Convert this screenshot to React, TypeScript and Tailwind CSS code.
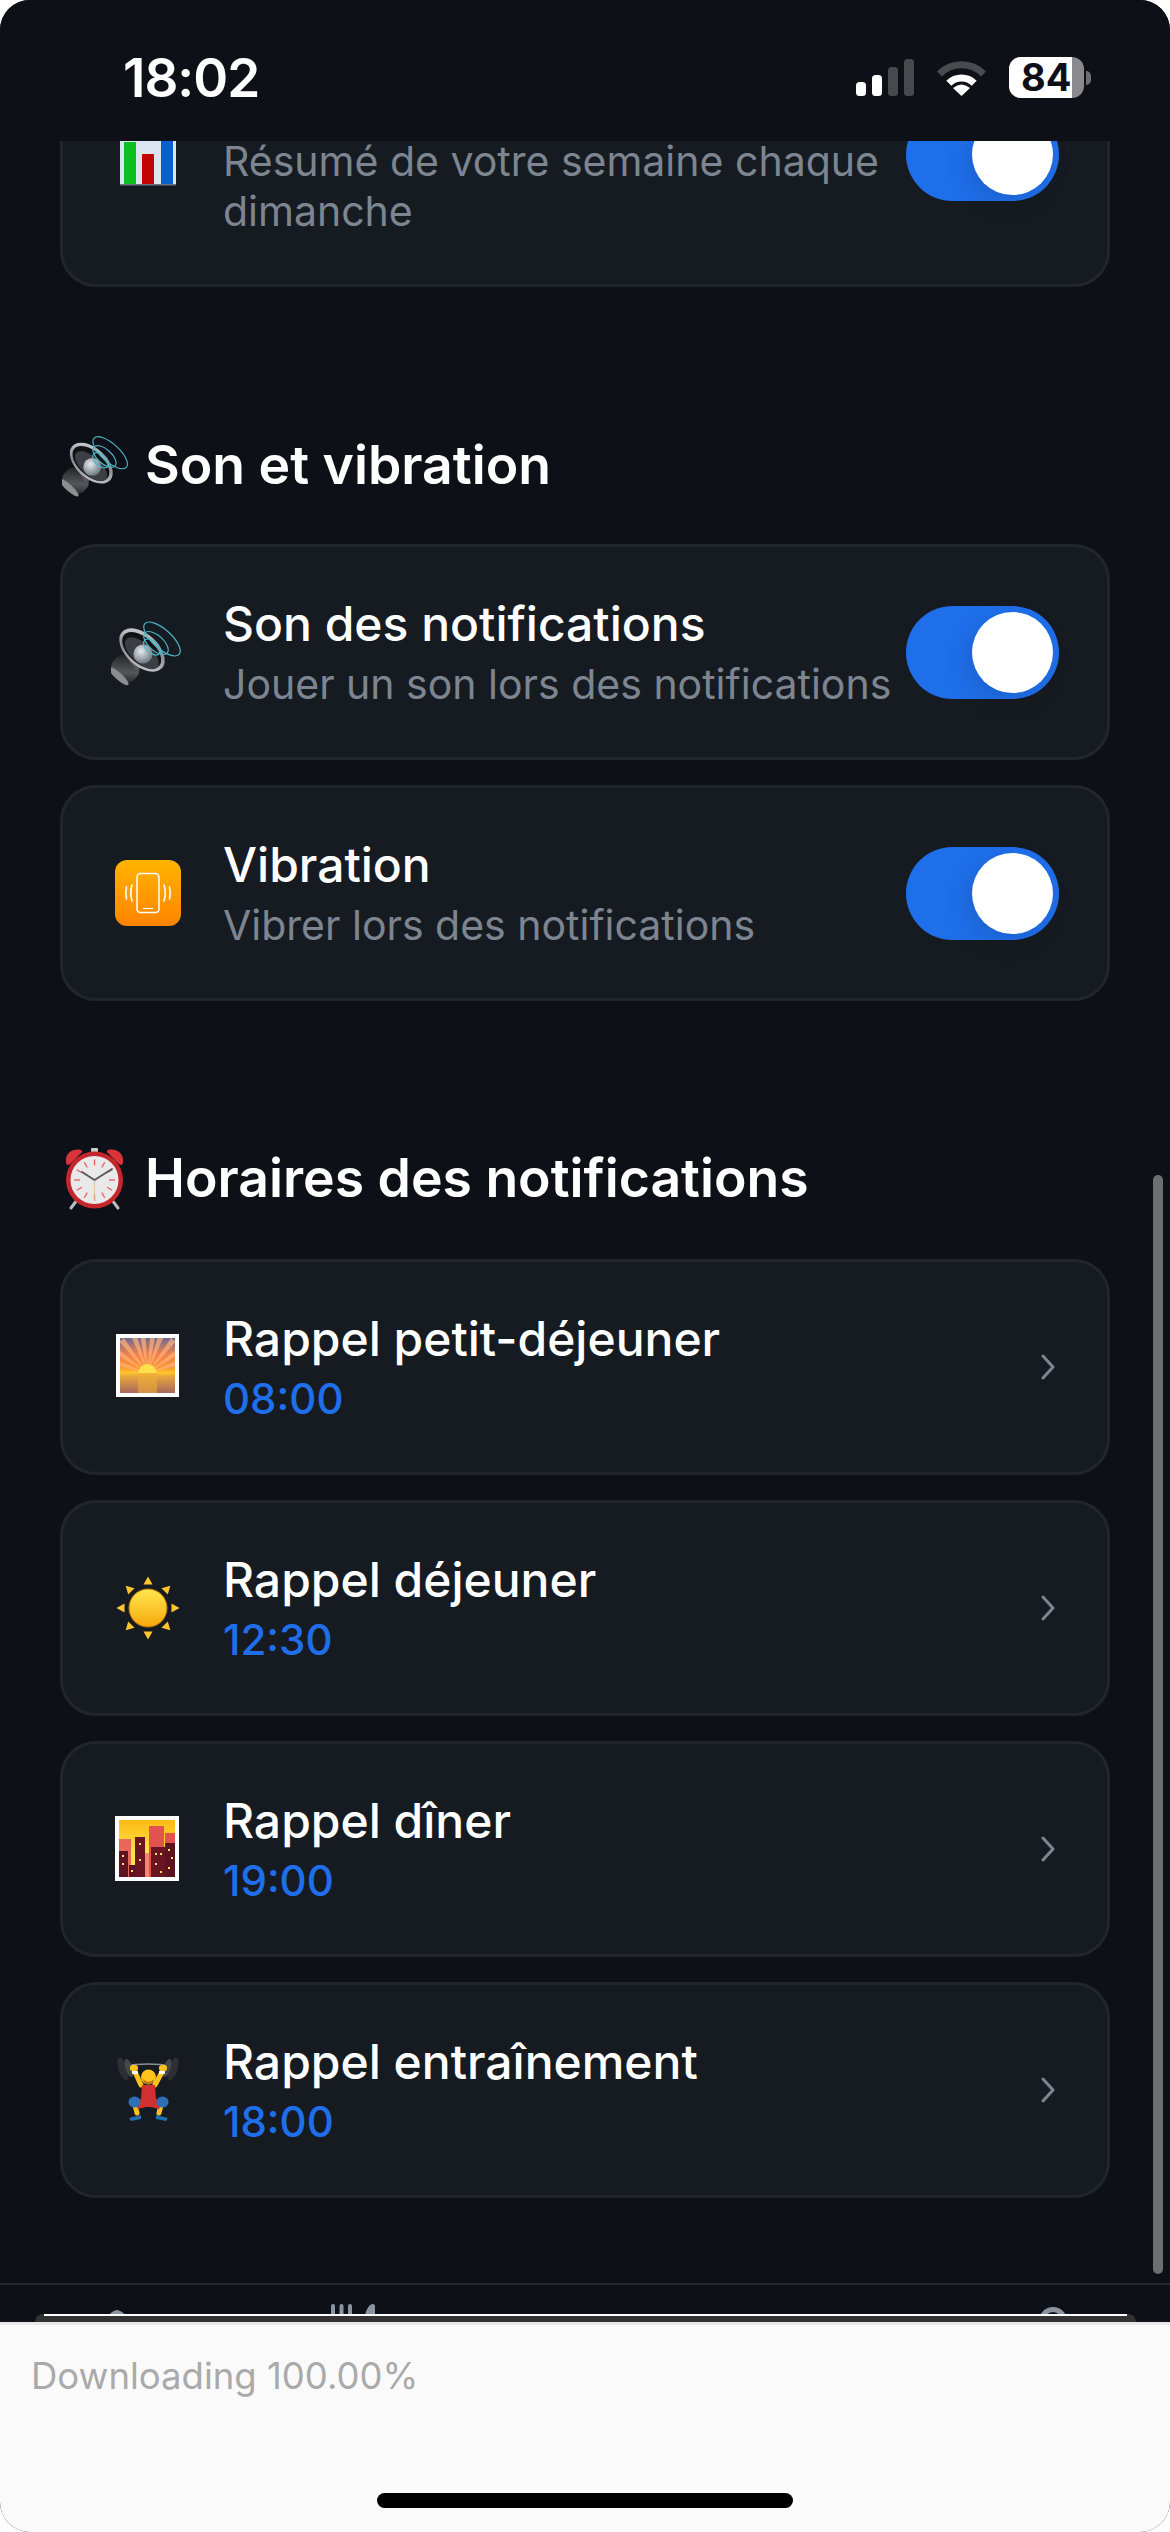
import type { ReactNode } from "react";

function ChartEmoji() {
    return (
        <svg width="72" height="72" viewBox="0 0 72 72">
            <rect x="9" y="3" width="56" height="64" fill="#dbe5ef" />
            <rect x="9" y="66" width="56" height="1.5" fill="#6b7280" />
            <rect x="13" y="24" width="12" height="42" fill="#0cc020" />
            <rect x="31" y="36" width="12" height="30" fill="#c00404" />
            <rect x="50" y="3" width="12" height="63" fill="#0a5fcf" />
        </svg>
    );
}

function SpeakerEmoji({ size = 72 }: { size?: number }) {
    return (
        <svg width={size} height={size} viewBox="6 6 72 72">
            <defs>
                <linearGradient id="spkRim" x1="0" y1="0" x2="1" y2="1">
                    <stop offset="0" stopColor="#e2e4e6" />
                    <stop offset="0.5" stopColor="#85888c" />
                    <stop offset="1" stopColor="#d5d7da" />
                </linearGradient>
                <linearGradient id="spkMag" x1="0" y1="0" x2="1" y2="1">
                    <stop offset="0" stopColor="#1b1b1d" />
                    <stop offset="0.6" stopColor="#55565a" />
                    <stop offset="1" stopColor="#1d1d1f" />
                </linearGradient>
                <radialGradient id="spkDome" cx="0.4" cy="0.35" r="0.7">
                    <stop offset="0" stopColor="#e6ecef" />
                    <stop offset="1" stopColor="#67737a" />
                </radialGradient>
            </defs>
            <g transform="rotate(42 21 58)">
                <rect x="7" y="48" width="28" height="22" rx="9" fill="url(#spkMag)" />
                <ellipse cx="21" cy="69" rx="13" ry="3.5" fill="#8b8d90" />
            </g>
            <path d="M24 50 L43 47 L32 62 Z" fill="#55575a" />
            <g transform="rotate(42 37 40)">
                <ellipse cx="37" cy="40" rx="27" ry="16" fill="url(#spkRim)" />
                <ellipse cx="37" cy="40.5" rx="23.500" ry="13" fill="#111214" />
                <ellipse cx="39" cy="42.500" rx="21" ry="10" fill="#3b3e42" />
            </g>
            <circle cx="38" cy="44" r="9.500" fill="url(#spkDome)" />
            <g fill="none" stroke="#4db6c8" strokeWidth="1.200">
                <ellipse cx="57" cy="29" rx="23" ry="9.500" transform="rotate(42 57 29)" />
                <ellipse cx="51" cy="33" rx="15" ry="7.500" transform="rotate(42 51 33)" />
                <ellipse cx="47" cy="37" rx="10" ry="6" transform="rotate(42 47 37)" />
            </g>
        </svg>
    );
}

function VibrationEmoji() {
    return (
        <svg width="72" height="72" viewBox="0 0 72 72">
            <defs>
                <linearGradient id="vibBg" x1="0" y1="0" x2="0" y2="1">
                    <stop offset="0" stopColor="#ffb300" />
                    <stop offset="1" stopColor="#ff8400" />
                </linearGradient>
            </defs>
            <rect x="4" y="3" width="66" height="66" rx="12" fill="url(#vibBg)" />
            <rect x="26" y="16.5" width="22" height="39" rx="3.5" fill="none" stroke="#fff" strokeWidth="1.5" />
            <path d="M32 51.5h10" stroke="#fff" strokeWidth="1.2" />
            <g fill="none" stroke="#fff" strokeWidth="1.6" strokeLinecap="round">
                <path d="M21 28q-2.500 8 0 16" />
                <path d="M15.500 30q-1.500 6 0 12" />
                <path d="M53 28q2.500 8 0 16" />
                <path d="M58.500 30q1.500 6 0 12" />
            </g>
        </svg>
    );
}

function AlarmEmoji() {
    const ticks = [0, 30, 60, 90, 120, 150, 180, 210, 240, 270, 300, 330];
    return (
        <svg width="72" height="72" viewBox="0 0 72 72">
            <path d="M17 58 L11 66" stroke="#b9bcc0" strokeWidth="3" strokeLinecap="round" />
            <path d="M52 58 L58 66" stroke="#b9bcc0" strokeWidth="3" strokeLinecap="round" />
            <rect x="31" y="6" width="7" height="4" rx="1" fill="#c9cbce" />
            <path d="M6 20 C5 12 12 6 21 8 C23 9 22 11 20 12 L10 22 C8 24 6 23 6 20Z" fill="#d8343a" />
            <path d="M63 20 C64 12 57 6 48 8 C46 9 47 11 49 12 L59 22 C61 24 63 23 63 20Z" fill="#d8343a" />
            <circle cx="34.500" cy="38" r="28.500" fill="#c4262c" />
            <circle cx="34.500" cy="38" r="24" fill="#e9e9ea" />
            {ticks.map((a) => (
                <path
                    key={a}
                    d="M34.500 17.500v6"
                    stroke="#ea5b5f"
                    strokeWidth="1.300"
                    transform={`rotate(${a} 34.500 38)`}
                />
            ))}
            <path d="M34.500 38 L22 30" stroke="#55585c" strokeWidth="2" strokeLinecap="round" />
            <path d="M34.500 38 L52 27" stroke="#55585c" strokeWidth="2" strokeLinecap="round" />
            <path d="M34.500 38 V58" stroke="#d9b98c" strokeWidth="0.7" />
        </svg>
    );
}

function SunriseEmoji() {
    const rays = [-72, -55, -38, -20, -7, 8, 20, 38, 55, 72];
    return (
        <svg width="72" height="72" viewBox="0 0 72 72">
            <defs>
                <linearGradient id="riseSky" x1="0" y1="0" x2="0" y2="1">
                    <stop offset="0" stopColor="#6f6a94" />
                    <stop offset="0.3" stopColor="#f2824c" />
                    <stop offset="0.55" stopColor="#fb9a2f" />
                    <stop offset="0.63" stopColor="#fdc62e" />
                    <stop offset="0.7" stopColor="#e8a63c" />
                    <stop offset="1" stopColor="#a8685e" />
                </linearGradient>
                <clipPath id="riseClip">
                    <rect x="9" y="7" width="55" height="35" />
                </clipPath>
            </defs>
            <rect x="5" y="3" width="63" height="63" fill="#fff" />
            <rect x="9" y="7" width="55" height="55" fill="url(#riseSky)" />
            <g clipPath="url(#riseClip)">
                {rays.map((a) => (
                    <path
                        key={a}
                        d="M36.500 42 L33.500 0 L39.500 0 Z"
                        fill="#ffb27a"
                        opacity="0.7"
                        transform={`rotate(${a} 36.500 42)`}
                    />
                ))}
            </g>
            <path d="M27.500 42a9 9 0 0 1 18 0Z" fill="#ffe14d" />
            <rect x="27" y="42" width="19" height="20" fill="#f0ab38" opacity="0.6" />
        </svg>
    );
}

function SunEmoji() {
    const rays = [0, 45, 90, 135, 180, 225, 270, 315];
    return (
        <svg width="72" height="72" viewBox="0 0 72 72">
            <defs>
                <linearGradient id="sunFill" x1="0" y1="0" x2="0" y2="1">
                    <stop offset="0" stopColor="#ffe84f" />
                    <stop offset="1" stopColor="#f7a70b" />
                </linearGradient>
            </defs>
            {rays.map((a) => (
                <path key={a} d="M37 4.500 L41.500 12.500 H32.500 Z" fill="#fcc52d" transform={`rotate(${a} 37 36)`} />
            ))}
            <circle cx="37" cy="36" r="19" fill="url(#sunFill)" stroke="#c77a0a" strokeWidth="1" />
        </svg>
    );
}

function CityEmoji() {
    return (
        <svg width="72" height="72" viewBox="0 0 72 72">
            <defs>
                <linearGradient id="citySky" x1="0" y1="0" x2="0" y2="1">
                    <stop offset="0" stopColor="#fdb913" />
                    <stop offset="0.6" stopColor="#fde74c" />
                </linearGradient>
            </defs>
            <rect x="4" y="3" width="64" height="65" fill="#fff" />
            <rect x="8" y="7" width="56" height="57" fill="url(#citySky)" />
            <rect x="8" y="26" width="12" height="38" fill="#e9685a" />
            <rect x="8" y="38" width="9" height="26" fill="#5f1220" />
            <rect x="18" y="52" width="8" height="12" fill="#5f1220" />
            <rect x="24" y="24" width="10" height="40" fill="#6b1424" />
            <rect x="34" y="40" width="6" height="24" fill="#f08a6a" />
            <rect x="38" y="13" width="15" height="51" rx="1" fill="#e2524f" />
            <rect x="40" y="34" width="16" height="30" fill="#6b1424" />
            <rect x="54" y="20" width="10" height="44" fill="#e2524f" />
            <rect x="54" y="30" width="10" height="34" fill="#5f1220" />
            <g fill="#ffe27a">
                <rect x="11" y="42" width="2" height="2" />
                <rect x="11" y="50" width="2" height="2" />
                <rect x="20" y="57" width="2" height="2" />
                <rect x="28" y="30" width="2" height="2" />
                <rect x="28" y="46" width="2" height="2" />
                <rect x="44" y="40" width="2" height="2" />
                <rect x="49" y="40" width="2" height="2" />
                <rect x="44" y="50" width="2" height="2" />
                <rect x="49" y="58" width="2" height="2" />
                <rect x="57" y="36" width="2" height="2" />
                <rect x="60" y="44" width="2" height="2" />
                <rect x="57" y="54" width="2" height="2" />
            </g>
        </svg>
    );
}

function LifterEmoji() {
    return (
        <svg width="72" height="72" viewBox="6 15 72 72">
            <path d="M18 27 Q43 23 68 27" fill="none" stroke="#8c8f94" strokeWidth="1.500" />
            <g fill="#2e2f33">
                <ellipse cx="18" cy="30" rx="4.500" ry="12" transform="rotate(-18 18 30)" />
                <ellipse cx="24" cy="29" rx="3.500" ry="9.500" transform="rotate(-18 24 29)" fill="#45474b" />
                <ellipse cx="68" cy="30" rx="4.500" ry="12" transform="rotate(18 68 30)" />
                <ellipse cx="62" cy="29" rx="3.500" ry="9.500" transform="rotate(18 62 29)" fill="#45474b" />
            </g>
            <g fill="none" stroke="#fcc21b" strokeLinecap="round">
                <path d="M30 33 L36 46" strokeWidth="5" />
                <path d="M57 33 L50 46" strokeWidth="5" />
                <path d="M30 66 L32 74" strokeWidth="5" />
                <path d="M56 66 L54 74" strokeWidth="5" />
            </g>
            <rect x="25" y="26" width="8" height="6" rx="2.500" fill="#fcc21b" />
            <rect x="54" y="26" width="8" height="6" rx="2.500" fill="#fcc21b" />
            <rect x="27" y="32" width="6" height="3" fill="#fff" />
            <rect x="54" y="32" width="6" height="3" fill="#fff" />
            <path d="M37 46 H50 L51 60 C54 62 56 62 58 63 L54 70 L46 68 H41 L33 70 L29 63 C31 62 33 62 36 60Z" fill="#d0302f" />
            <circle cx="43.500" cy="38" r="7.500" fill="#fcc21b" />
            <path d="M38 40q5.500 6 11 0l-1.500 5h-8Z" fill="#b9771a" />
            <ellipse cx="29.500" cy="63" rx="6" ry="5.500" fill="#2f6fb5" />
            <ellipse cx="57.500" cy="63" rx="6" ry="5.500" fill="#2f6fb5" />
            <path d="M24 79 L36 76 V80 L26 82Z" fill="#1f6fb5" />
            <path d="M63 79 L51 76 V80 L61 82Z" fill="#1f6fb5" />
        </svg>
    );
}

function Toggle() {
    return (
        <div className="flex h-[93px] w-[153px] shrink-0 items-center justify-end rounded-full bg-[#1f6feb] pr-[6px]">
            <div className="h-[81px] w-[81px] rounded-full bg-white shadow-[-6px_8px_24px_rgba(0,0,0,0.12)]" />
        </div>
    );
}

function Chevron() {
    return (
        <svg className="mr-[4px] shrink-0" width="14" height="28" viewBox="0 0 14 28" fill="none">
            <path d="M2 3 L12 14 L2 25" stroke="#7d8590" strokeWidth="3" strokeLinecap="round" strokeLinejoin="round" />
        </svg>
    );
}

function Card({ icon, title, children, right }: { icon: ReactNode; title: string; children: ReactNode; right: ReactNode }) {
    return (
        <div className="flex items-center rounded-[36px] border-[3px] border-[#21262d] bg-[#161b22] px-[48px] py-[48px]">
            <div className="flex h-[72px] w-[72px] shrink-0 items-center justify-center">{icon}</div>
            <div className="ml-[40px] mr-[14px] min-w-0 flex-1">
                <div className="text-[48px] leading-[58px] font-medium text-white">{title}</div>
                <div className="mt-[6px]">{children}</div>
            </div>
            {right}
        </div>
    );
}

function Sub({ text }: { text: string }) {
    return <div className="text-[41px] leading-[50px] text-[#7d8590]">{text}</div>;
}

function Time({ text }: { text: string }) {
    return <div className="text-[42px] leading-[50px] font-medium text-[#1f6feb]">{text}</div>;
}

function Heading({ icon, text }: { icon: ReactNode; text: string }) {
    return (
        <div className="flex h-[65px] items-center">
            <div className="flex h-[72px] w-[72px] shrink-0 items-center justify-center">{icon}</div>
            <h2 className="ml-[13px] text-[53.5px] leading-[65px] font-semibold text-white">{text}</h2>
        </div>
    );
}

function StatusBar() {
    return (
        <div className="flex h-[141px] shrink-0 items-start justify-between bg-[#0d1117] pl-[123px] pr-[79px] pt-[47px]">
            <span className="text-[53px] leading-[62px] font-semibold tracking-[-1px] text-white">18:02</span>
            <div className="mt-[10px] flex items-center">
                <svg width="58" height="37" viewBox="0 0 58 37">
                    <rect x="0" y="23" width="10" height="14" rx="3.500" fill="#fff" />
                    <rect x="16" y="16" width="10" height="21" rx="3.500" fill="#fff" />
                    <rect x="32" y="8" width="10" height="29" rx="3.500" fill="#48494c" />
                    <rect x="48" y="0" width="10" height="37" rx="3.500" fill="#48494c" />
                </svg>
                <svg className="ml-[22px]" width="51" height="37" viewBox="0 0 51 37" fill="none">
                    <path d="M3.500 15 A31 31 0 0 1 47.500 15" stroke="#4a4b4e" strokeWidth="7" />
                    <path d="M12.800 24.300 A18 18 0 0 1 38.200 24.300" stroke="#fff" strokeWidth="7" />
                    <path d="M25.500 37 L17 29 Q25.500 22 34 29Z" fill="#fff" />
                </svg>
                <div className="relative ml-[22px] flex h-[41px] w-[75px] overflow-hidden rounded-[12px] bg-[#8a8a8e]">
                    <div className="w-[63px] bg-white" />
                    <span className="absolute inset-0 pl-[12px] text-[38px] leading-[41px] font-bold text-[#0d1117]">84</span>
                </div>
                <div className="ml-[2px] h-[14px] w-[5px] rounded-r-full bg-[#6e6e72]" />
            </div>
        </div>
    );
}

function TabBar() {
    return (
        <div className="relative grid h-[39px] shrink-0 grid-cols-5 overflow-hidden border-t-2 border-[#21262d] bg-[#0d1117]">
            <div className="flex justify-center pt-[25px]">
                <svg width="60" height="30" viewBox="0 0 60 30">
                    <path d="M30 0 C28 0 27 1 25 2 L2 22 H58 L35 2 C33 1 32 0 30 0Z" fill="#8b949e" />
                </svg>
            </div>
            <div className="flex justify-center pl-[4px] pt-[19px]">
                <svg width="44" height="30" viewBox="0 0 44 30" fill="#8b949e">
                    <rect x="0" y="0" width="4" height="30" rx="2" />
                    <rect x="8.500" y="0" width="4" height="30" rx="2" />
                    <rect x="17" y="0" width="4" height="30" rx="2" />
                    <path d="M42 0 C38 0 35 6 34 12 V30 H44 V2 C44 1 43 0 42 0Z" />
                </svg>
            </div>
            <div />
            <div />
            <div className="flex justify-center pt-[21px]">
                <svg width="30" height="30" viewBox="0 0 30 30" fill="none">
                    <circle cx="15" cy="15" r="11.500" stroke="#8b949e" strokeWidth="5" />
                </svg>
            </div>
            <div className="absolute bottom-0 left-[35px] right-[34px] h-[8px] overflow-hidden rounded-t-[10px] bg-[#333232]">
                <div className="mx-[9px] h-[2px] bg-white" />
            </div>
        </div>
    );
}

export default function App() {
    return (
        <div className="flex h-[2532px] w-[1170px] flex-col overflow-hidden rounded-[30px] bg-[#0d1117] font-['Inter','Noto_Sans',sans-serif]">
            <StatusBar />
            <div className="relative min-h-0 flex-1 overflow-hidden">
                <div className="mt-[-120px] px-[60px]">
                    <Card icon={<ChartEmoji />} title="Rapport hebdomadaire" right={<Toggle />}>
                        <Sub text="Résumé de votre semaine chaque dimanche" />
                    </Card>

                    <div className="mt-[145px]">
                        <Heading icon={<SpeakerEmoji size={68} />} text="Son et vibration" />
                    </div>
                    <div className="mt-[47px] flex flex-col gap-[25px]">
                        <Card icon={<SpeakerEmoji />} title="Son des notifications" right={<Toggle />}>
                            <Sub text="Jouer un son lors des notifications" />
                        </Card>
                        <Card icon={<VibrationEmoji />} title="Vibration" right={<Toggle />}>
                            <Sub text="Vibrer lors des notifications" />
                        </Card>
                    </div>

                    <div className="mt-[144px]">
                        <Heading icon={<AlarmEmoji />} text="Horaires des notifications" />
                    </div>
                    <div className="mt-[49px] flex flex-col gap-[25px]">
                        <Card icon={<SunriseEmoji />} title="Rappel petit-déjeuner" right={<Chevron />}>
                            <Time text="08:00" />
                        </Card>
                        <Card icon={<SunEmoji />} title="Rappel déjeuner" right={<Chevron />}>
                            <Time text="12:30" />
                        </Card>
                        <Card icon={<CityEmoji />} title="Rappel dîner" right={<Chevron />}>
                            <Time text="19:00" />
                        </Card>
                        <Card icon={<LifterEmoji />} title="Rappel entraînement" right={<Chevron />}>
                            <Time text="18:00" />
                        </Card>
                    </div>
                </div>
                {/* scroll indicator sits over the list */}
                <div className="absolute right-[7px] top-[1034px] h-[1099px] w-[10px] rounded-full bg-[#6c6e72]" />
            </div>
            <TabBar />
            <div className="flex h-[210px] shrink-0 flex-col justify-between border-t-[3px] border-[#e8e8e8] bg-[#fafafa] pb-[24px] pl-[31px] pt-[30px]">
                <span className="text-[36.5px] leading-[42px] text-[#aaaaaa]">Downloading 100.00%</span>
                <div className="ml-[346px] h-[15px] w-[416px] rounded-full bg-black" />
            </div>
        </div>
    );
}
